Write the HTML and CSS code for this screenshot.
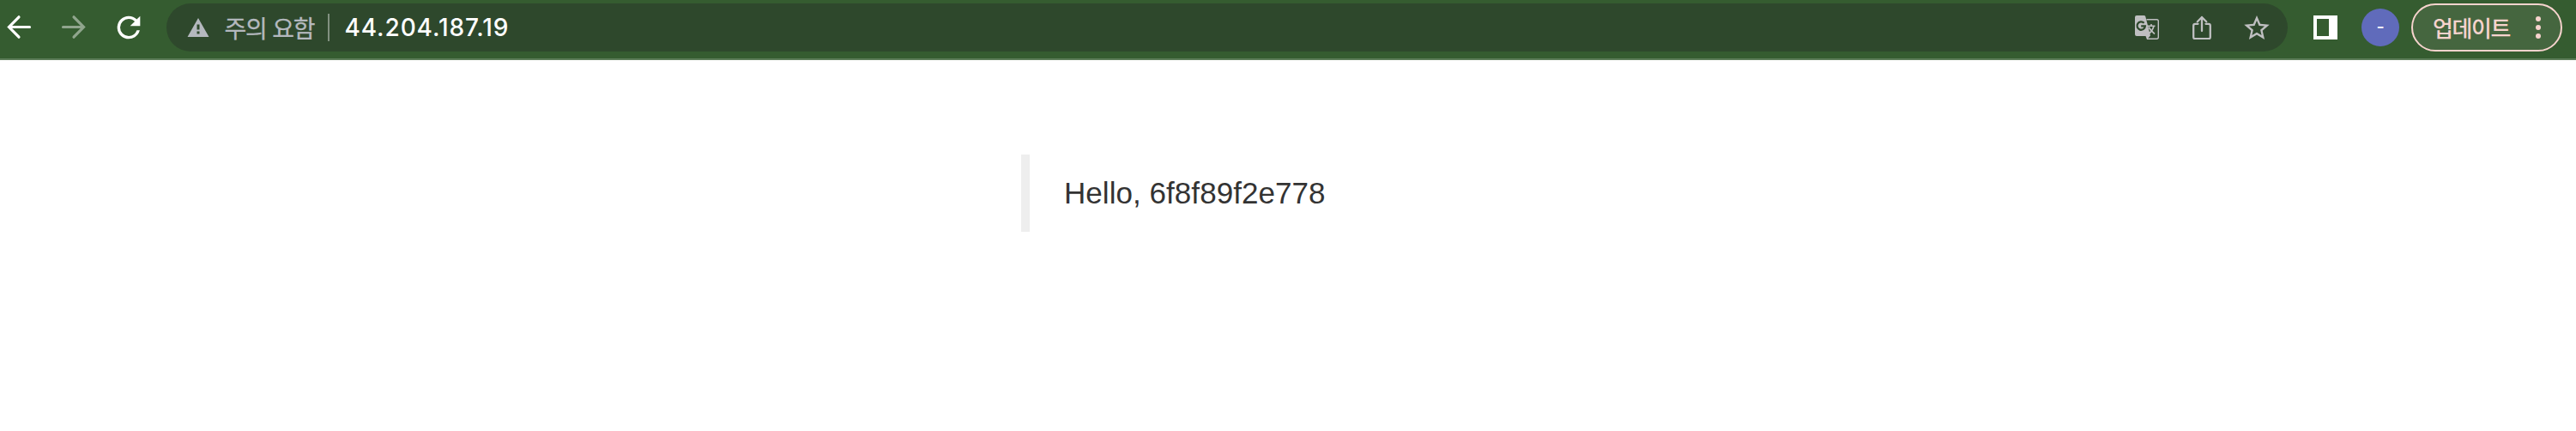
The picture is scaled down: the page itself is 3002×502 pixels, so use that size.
FILE: index.html
```html
<!DOCTYPE html>
<html lang="ko">
<head>
<meta charset="utf-8">
<title>44.204.187.19</title>
<link rel="stylesheet" href="styles.css">
</head>
<body>
<header class="toolbar">
  <nav class="nav">
    <svg class="icon" viewBox="0 0 40 40"><path class="line" d="M32.500 19.500H8.500M20 7.800 8.500 19.500 20 31.200"/></svg>
    <svg class="icon dim" viewBox="0 0 40 40"><path class="line" d="M7.500 19.500H31.500M20 7.800 31.500 19.500 20 31.200"/></svg>
    <svg class="icon" viewBox="0 0 24 24"><path d="M17.650 6.350A7.958 7.958 0 0 0 12 4a8 8 0 1 0 7.730 10h-2.080A5.990 5.990 0 0 1 12 18a6 6 0 1 1 0-12c1.660 0 3.140.690 4.220 1.780L13 11h7V4z"/></svg>
  </nav>
  <div class="omnibox">
    <svg class="warn" viewBox="0 0 26 22"><path fill-rule="evenodd" d="M13 0 25.500 22H.500zM11.500 7.500v6h3v-6zM11.500 15.500v3h3v-3z"/></svg>
    <span class="label">주의 요함</span>
    <span class="divider"></span>
    <span class="url">44.204.187.19</span>
    <div class="actions">
      <svg class="action" viewBox="0 0 28 28"><path d="M2 0h8.500a2 2 0 0 1 1.800 1.300L18 23.500 14 28 12.500 24H2a2 2 0 0 1-2-2V2a2 2 0 0 1 2-2z"/><path class="thin" d="M13.500 4.700h11.800a2 2 0 0 1 2 2v18.600a2 2 0 0 1-2 2H14"/><path class="han" d="M14.500 12.300h9M19 10v2.300M22 12.500Q20.500 18 16.500 21M16 13.500Q18.500 18 23 21.500"/><path class="cut" d="M10.600 8.800A4.700 4.700 0 1 0 11.900 12.300H7.200"/></svg>
      <svg class="action" viewBox="0 0 28 28"><path class="stroke" d="M9.500 9.800H6.200a2 2 0 0 0-2 2V25.200a2 2 0 0 0 2 2h15.600a2 2 0 0 0 2-2V11.800a2 2 0 0 0-2-2h-3.300M14 18V2M8.800 7.200 14 2l5.200 5.200"/></svg>
      <svg class="action star" viewBox="2 2 20 19"><path d="M22 9.240l-7.190-.620L12 2 9.190 8.630 2 9.240l5.460 4.730L5.820 21 12 17.270 18.180 21l-1.630-7.030zM12 15.400l-3.760 2.270 1-4.280-3.320-2.880 4.380-.380L12 6.100l1.710 4.040 4.380.380-3.320 2.880 1 4.280z"/></svg>
    </div>
  </div>
  <div class="panel"></div>
  <div class="avatar">-</div>
  <div class="update"><span>업데이트</span><svg class="dots" viewBox="0 0 6 26"><circle cx="3" cy="3" r="3"/><circle cx="3" cy="13" r="3"/><circle cx="3" cy="23" r="3"/></svg></div>
</header>
<main class="page">
  <blockquote class="quote">Hello, 6f8f89f2e778</blockquote>
</main>
</body>
</html>
```

FILE: styles.css
```css
body { margin: 0; background: #fff; }
.toolbar { box-sizing: border-box; height: 70px; padding: 4px 16px 0 2px; display: flex; align-items: flex-start; background: #355c30; border-bottom: 2px solid #5d7d59; font-family: Inter, "Noto Sans CJK KR", sans-serif; }
.nav { display: flex; gap: 24px; height: 56px; align-items: center; width: 192px; }
.icon { width: 40px; height: 40px; fill: #fff; }
.line { fill: none; stroke: #fff; stroke-width: 3.2; stroke-linecap: round; }
.dim { opacity: .45; }
.omnibox { box-sizing: border-box; height: 56px; width: 2472px; border-radius: 28px; background: #2e482c; display: flex; align-items: center; padding: 0 21px 0 23.5px; }
.warn { width: 26px; height: 22px; fill: #b4b8be; }
.label { margin-left: 18px; width: 105px; font: 28px/54px "Noto Sans CJK KR", sans-serif; letter-spacing: -1.2px; color: #b4b8be; white-space: nowrap; -webkit-text-stroke: .3px; }
.divider { width: 2px; height: 32px; margin: 0 17.5px 0 15.500px; background: #819180; }
.url { font-size: 28px; line-height: 56px; font-weight: 500; letter-spacing: .9px; color: #fff; white-space: nowrap; }
.actions { margin-left: auto; display: flex; align-items: center; gap: 35.5px; }
.action { width: 28px; height: 28px; fill: #bfbfc1; }
.star { width: 30px; margin-bottom: 1px; }
.thin { fill: none; stroke: #bfbfc1; stroke-width: 1.4; }
.han { fill: none; stroke: #bfbfc1; stroke-width: 1.6; }
.stroke { fill: none; stroke: #bfbfc1; stroke-width: 2.3; stroke-linecap: round; stroke-linejoin: round; }
.cut { fill: none; stroke: #2e482c; stroke-width: 2.3; }
.panel { box-sizing: border-box; width: 28px; height: 28px; margin: 14px 28px 0 30px; border: solid #fff; border-width: 4px 10px 4px 4px; }
.avatar { width: 44px; height: 44px; margin: 6px 14px 0 0; border-radius: 50%; background: #606bbb; color: #fff; font-size: 20px; font-weight: 500; line-height: 43px; text-align: center; }
.update { box-sizing: border-box; width: 176px; height: 56px; border: 2px solid #f6d3cd; border-radius: 28px; background: #45663f; color: #f6d3cd; display: flex; align-items: center; justify-content: space-between; padding: 0 23px; font: 500 26px/50px "Noto Sans CJK KR", sans-serif; letter-spacing: -1.4px; }
.dots { width: 6px; height: 26px; fill: #f6d3cd; }
.page { padding: 110px 0 0 1190px; }
.quote { margin: 0; height: 90px; width: 600px; box-sizing: border-box; border-left: 10px solid #eee; padding-left: 40px; font: 35px/90px "Liberation Sans", Arial, sans-serif; letter-spacing: .05px; color: #333; }
```
